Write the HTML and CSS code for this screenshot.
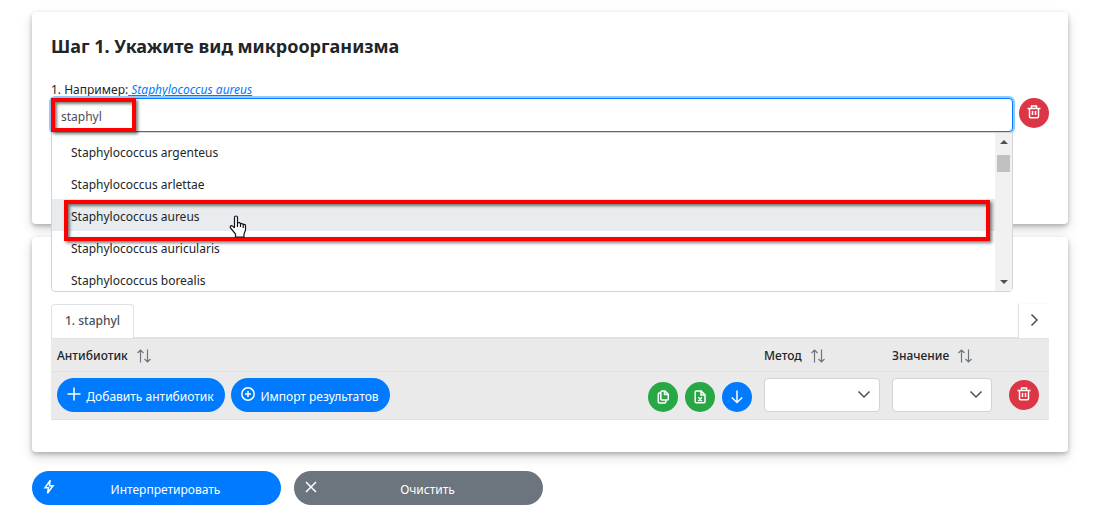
FILE: index.html
```html
<!DOCTYPE html>
<html lang="ru">
<head>
<meta charset="utf-8">
<meta name="viewport" content="width=device-width, initial-scale=1">
<title>Интерпретация</title>
<link rel="stylesheet" href="styles.css">
</head>
<body>
<svg class="sprite" aria-hidden="true">
  <symbol id="trash" viewBox="0 0 14 14"><path d="M.5 3.500h13M4.500 3.500v-2.500h5v2.500M2.500 3.500v8q0 1.200 1 1.200h7q1 0 1-1.200v-8M5.500 6v4M8.500 6v4"/></symbol>
  <symbol id="sort" viewBox="0 0 14 14"><path d="M3.500 13.500V1M.5 4l3-3 3 3M10.500 .5V13M7.500 10l3 3 3-3"/></symbol>
  <symbol id="down" viewBox="0 0 14 14"><path d="M1.500 4.500L7 10l5.500-5.500"/></symbol>
</svg>
<main class="page">
  <section class="card card-organism">
    <h1 class="title">Шаг 1. Укажите вид микроорганизма</h1>
    <label class="hint" for="organism">1. Например:<a class="example" href="#aureus">&nbsp;<i>Staphylococcus aureus</i></a></label>
    <div class="field-row">
      <div class="field">
        <input class="search" id="organism" type="text" value="staphyl" autocomplete="off">
        <div class="menu">
          <ul class="options">
            <li class="option">Staphylococcus argenteus</li>
            <li class="option">Staphylococcus arlettae</li>
            <li class="option active" id="aureus">Staphylococcus aureus
              <span class="mark mark-option"></span>
              <svg class="cursor" viewBox="0 0 18 23"><path d="M5.500 13V2.500q0-1.500 1.500-1.500t1.500 1.500V8q2.500-1 3 .8 2-.8 2.700.7 2.300-.5 2.300 1.500v4l-1.500 4V22H6.500v-3L1.500 13q-.8-2 .8-2.300 1.500 0 3.200 2.300M8.500 8v4M11.500 9v3M14.200 10v3"/></svg>
            </li>
            <li class="option">Staphylococcus auricularis</li>
            <li class="option">Staphylococcus borealis</li>
          </ul>
          <div class="scroll">
            <svg class="arrow" viewBox="0 0 8 4"><path d="M0 4l4-4 4 4z"/></svg>
            <span class="thumb"></span>
            <svg class="arrow arrow-end" viewBox="0 0 8 4"><path d="M0 0l4 4 4-4z"/></svg>
          </div>
        </div>
        <span class="mark mark-search"></span>
      </div>
      <button class="round red" type="button" aria-label="Удалить"><svg class="icon"><use href="#trash"/></svg></button>
    </div>
  </section>

  <section class="card card-results">
    <div class="tabs">
      <button class="tab" type="button">1. staphyl</button>
      <button class="next" type="button" aria-label="Далее"><svg class="icon" viewBox="0 0 14 14"><path d="M4.500 1.500L10 7l-5.500 5.500"/></svg></button>
    </div>
    <table class="grid">
      <thead>
        <tr>
          <th>Антибиотик<svg class="sort"><use href="#sort"/></svg></th>
          <th class="col-method">Метод<svg class="sort"><use href="#sort"/></svg></th>
          <th class="col-value">Значение<svg class="sort"><use href="#sort"/></svg></th>
          <th class="col-action"></th>
        </tr>
      </thead>
      <tbody>
        <tr>
          <td>
            <div class="tools">
              <button class="pill add" type="button"><svg class="icon" viewBox="0 0 14 14"><path d="M7 .5v13M.5 7h13"/></svg><span class="label">Добавить антибиотик</span></button>
              <button class="pill import" type="button"><svg class="icon" viewBox="0 0 14 14"><circle cx="7" cy="7" r="6.200"/><path d="M7 4v6M4 7h6"/></svg><span class="label">Импорт результатов</span></button>
              <div class="exports">
                <button class="round green" type="button" aria-label="Копировать"><svg class="icon" viewBox="0 0 14 14"><path d="M5.500 1h3.500L12.300 4.300v4.700q0 1-1 1H5.800q-1 0-1-1V2q0-1 1-1zM8.500 1.200v3.400H12M4.500 3H3.300q-1 0-1 1v7.800q0 1.200 1 1.200h5.500q1 0 1-1v-2"/></svg></button>
                <button class="round green" type="button" aria-label="Excel"><svg class="icon" viewBox="0 0 14 14"><path d="M3.200 1h5L12 4.800v7q0 1-1 1H3.200q-1 0-1-1V2q0-1 1-1zM8 1v4h4M5.300 7.300l3.600 4M8.900 7.300l-3.600 4"/></svg></button>
                <button class="round blue" type="button" aria-label="Вниз"><svg class="icon" viewBox="0 0 14 14"><path d="M7 .5v12M1.800 7.500L7 12.500l5.200-5"/></svg></button>
              </div>
            </div>
          </td>
          <td><div class="pick"><select class="select" aria-label="Метод"><option></option></select><svg class="chevron"><use href="#down"/></svg></div></td>
          <td><div class="pick"><select class="select" aria-label="Значение"><option></option></select><svg class="chevron"><use href="#down"/></svg></div></td>
          <td class="cell-action"><button class="round red" type="button" aria-label="Удалить"><svg class="icon"><use href="#trash"/></svg></button></td>
        </tr>
      </tbody>
    </table>
  </section>

  <div class="actions">
    <button class="pill wide" type="button"><svg class="icon" viewBox="0 0 14 14"><path d="M8 .8L3 7.800h3.500L5.500 13.200l5.500-7.500H7.500z"/></svg><span class="label">Интерпретировать</span></button>
    <button class="pill wide gray" type="button"><svg class="icon" viewBox="0 0 14 14"><path d="M2 2l10 10M12 2L2 12"/></svg><span class="label">Очистить</span></button>
  </div>
</main>
</body>
</html>
```
FILE: styles.css
```css
* { box-sizing: border-box; }
body {
  margin: 0;
  background: #fff;
  color: #212529;
  font: 12px/18px "Noto Sans", "Open Sans", sans-serif;
}
button, input, select { font: inherit; color: inherit; margin: 0; }
button { border: 0; padding: 0; cursor: pointer; }
svg { fill: none; stroke: currentColor; stroke-width: 1.5; }
.sprite { display: none; }
.page { padding: 12px 32px; }
.card {
  padding: 20px 19px;
  border-radius: 4px;
  background: #fff;
  box-shadow: 0 5px 12px rgba(0, 0, 0, .16), 0 2px 4px rgba(0, 0, 0, .22);
}
.card-organism { min-height: 212px; margin-bottom: 13px; }
.card-results { padding: 67px 19px 32px; margin-bottom: 19px; }
.title { margin: 0 0 21px; font-size: 18px; line-height: 28px; font-weight: 700; }
.hint { display: block; line-height: 17px; }
.example { color: #007bff; text-decoration: underline; }
.field-row { display: flex; align-items: flex-start; gap: 6px; }
.field { position: relative; flex: 1; }
.search {
  display: block;
  width: 100%;
  height: 34px;
  padding: 2px 9px 0;
  border: 1px solid #007bff;
  border-radius: 4px;
  outline: 0;
  box-shadow: 0 0 0 2px #94caff;
  color: #495057;
  background: #fff;
}
.menu {
  position: absolute;
  z-index: 2;
  top: 100%;
  left: 0;
  right: 0;
  display: flex;
  height: 160px;
  border: 1px solid #d3d6d9;
  border-radius: 0 0 4px 4px;
  background: #fff;
}
.options { flex: 1; margin: 0; padding: 2px 0 0; list-style: none; }
.option { height: 32px; padding: 0 19px; line-height: 36px; }
.options .option:last-child { height: 28px; }
.active { position: relative; background: #e9ecef; }
.mark {
  position: absolute;
  z-index: 3;
  border: 4px solid #f00;
  box-shadow: 2px 2px 3px rgba(0, 0, 0, .5), inset 2px 2px 3px rgba(0, 0, 0, .5);
  pointer-events: none;
}
.mark-search { top: 0; left: 0; width: 85px; height: 34px; }
.mark-option { top: 1px; left: 12px; right: 5px; height: 41px; }
.cursor {
  position: absolute;
  z-index: 4;
  top: 16px;
  left: 177px;
  width: 18px;
  height: 23px;
  fill: #fff;
  stroke: #112;
  stroke-width: 1.2;
}
.scroll {
  display: flex;
  flex-direction: column;
  align-items: center;
  width: 17px;
  padding: 7px 0;
  background: #f1f1f1;
}
.arrow { width: 8px; height: 4px; fill: #505050; stroke: none; }
.arrow-end { margin-top: auto; }
.thumb { width: 13px; height: 17px; margin-top: 11px; background: #c1c1c1; }
.round {
  display: inline-flex;
  align-items: center;
  justify-content: center;
  width: 30px;
  height: 30px;
  border-radius: 50%;
  color: #fff;
}
.icon { display: block; flex: none; width: 14px; height: 14px; }
.red { background: #dc3545; }
.red .icon { margin-bottom: 2px; }
.green { background: #28a745; }
.blue { background: #007bff; }
.tabs { display: flex; height: 34px; }
.tab {
  width: 83px;
  padding-bottom: 2px;
  border: 1px solid #dee2e6;
  border-bottom: 0;
  border-radius: 4px 4px 0 0;
  background: #fff;
  color: #495057;
  font-weight: 500;
}
.tabs::after { content: ""; order: 1; flex: 1; border-bottom: 1px solid #dee2e6; }
.next {
  order: 2;
  display: flex;
  align-items: center;
  justify-content: center;
  width: 30px;
  padding-bottom: 2px;
  background: #fff;
  color: #495057;
  box-shadow: -1px 0 1px #dee2e6;
}
.grid {
  width: 100%;
  border-collapse: separate;
  border-spacing: 0;
  table-layout: fixed;
  background: #eaeaea;
}
.grid th {
  height: 34px;
  padding: 2px 6px 0;
  border-top: 1px solid #dee2e6;
  border-bottom: 1px solid #dee2e6;
  font-weight: 500;
  text-align: left;
}
.grid td { height: 48px; padding: 6px 6px 7px; border-bottom: 1px solid #dee2e6; }
.col-method { width: 128px; }
.col-value { width: 112px; }
.col-action { width: 51px; }
.sort { width: 14px; height: 14px; margin-left: 9px; vertical-align: -3px; color: #6c757d; stroke-width: 1.2; }
.tools { display: flex; gap: 6px; }
.exports { display: flex; gap: 7px; align-self: flex-end; margin-left: auto; }
.pill {
  display: flex;
  align-items: center;
  height: 34px;
  padding: 0 10px;
  border-radius: 17px;
  background: #007bff;
  color: #fff;
  white-space: nowrap;
}
.pill .icon { margin-bottom: 2px; }
.pill .label { flex: 1; padding: 3px 0 0 4px; text-align: center; }
.add { width: 168px; }
.import { width: 159px; }
.pick { position: relative; }
.select {
  display: block;
  width: 100%;
  height: 34px;
  border: 1px solid #ced4da;
  border-radius: 4px;
  background: #fff;
  appearance: none;
}
.chevron { position: absolute; top: 9px; right: 9px; width: 14px; height: 14px; color: #495057; pointer-events: none; }
.grid .cell-action { padding: 5px 0 7px; text-align: center; }
.cell-action .round { vertical-align: middle; }
.actions { display: flex; gap: 13px; }
.wide { width: 249px; }
.gray { background: #6c757d; }
```
